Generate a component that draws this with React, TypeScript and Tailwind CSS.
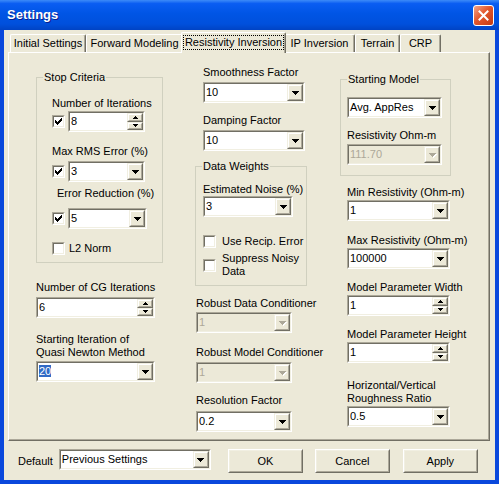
import React from 'react';

const sunkenOuter = 'border border-t-[#ACA899] border-l-[#ACA899] border-r-white border-b-white';
const sunkenInner = 'border border-t-[#716F64] border-l-[#716F64] border-r-[#F1EFE2] border-b-[#F1EFE2]';
const raisedOuter = 'border border-t-[#F1EFE2] border-l-[#F1EFE2] border-r-[#716F64] border-b-[#716F64]';
const raisedInner = 'border border-t-white border-l-white border-r-[#ACA899] border-b-[#ACA899]';

function Tri({ up, small, disabled }: { up?: boolean; small?: boolean; disabled?: boolean }) {
  const size = small ? 5 : 7;
  const rows = small ? [5, 3, 1] : [7, 5, 3, 1];
  const h = rows.length;
  return (
    <svg width={size} height={h} shapeRendering="crispEdges" className="block overflow-visible">
      {disabled &&
        rows.map((w, i) => (
          <rect key={'s' + i} x={(size - w) / 2 + 1} y={(up ? h - 1 - i : i) + 1} width={w} height={1} fill="#fff" />
        ))}
      {rows.map((w, i) => (
        <rect key={i} x={(size - w) / 2} y={up ? h - 1 - i : i} width={w} height={1} fill={disabled ? '#ACA899' : '#000'} />
      ))}
    </svg>
  );
}

function DropBtn({ disabled }: { disabled?: boolean }) {
  return (
    <div className={`h-full w-[16px] shrink-0 ${raisedOuter}`}>
      <div className={`flex h-full items-center justify-center bg-[#ECE9D8] ${raisedInner}`}>
        <Tri disabled={disabled} />
      </div>
    </div>
  );
}

function SpinHalf({ up }: { up?: boolean }) {
  return (
    <div className={`flex-1 ${raisedOuter}`}>
      <div className={`flex h-full items-center justify-center bg-[#ECE9D8] ${raisedInner}`}>
        <Tri up={up} small />
      </div>
    </div>
  );
}

function Field({
  w,
  value,
  spin,
  disabled,
  selected,
  className = '',
}: {
  w: string;
  value: string;
  spin?: boolean;
  disabled?: boolean;
  selected?: boolean;
  className?: string;
}) {
  return (
    <div className={`h-[21px] shrink-0 ${w} ${sunkenOuter} ${className}`}>
      <div className={`flex h-full ${sunkenInner} ${disabled ? 'bg-[#ECE9D8]' : 'bg-white'}`}>
        <div className={`flex-1 truncate pl-[1px] leading-[17px] ${disabled ? 'text-[#ACA899]' : ''}`}>
          {selected ? <span className="bg-[#316AC5] text-white">{value}</span> : value}
        </div>
        {spin ? (
          <div className="flex h-full w-[16px] shrink-0 flex-col">
            <SpinHalf up />
            <SpinHalf />
          </div>
        ) : (
          <DropBtn disabled={disabled} />
        )}
      </div>
    </div>
  );
}

function Check({ checked }: { checked?: boolean }) {
  return (
    <div className={`h-[13px] w-[13px] shrink-0 ${sunkenOuter}`}>
      <div className={`flex h-full w-full items-center justify-center bg-white ${sunkenInner}`}>
        {checked && (
          <svg width="7" height="7" shapeRendering="crispEdges" className="block">
            <rect x="6" y="0" width="1" height="1" />
            <rect x="5" y="1" width="2" height="1" />
            <rect x="0" y="2" width="1" height="1" />
            <rect x="4" y="2" width="3" height="1" />
            <rect x="0" y="3" width="2" height="1" />
            <rect x="3" y="3" width="3" height="1" />
            <rect x="0" y="4" width="5" height="1" />
            <rect x="1" y="5" width="3" height="1" />
            <rect x="2" y="6" width="1" height="1" />
          </svg>
        )}
      </div>
    </div>
  );
}

function Label({ children, className = '' }: { children: React.ReactNode; className?: string }) {
  return <div className={`whitespace-nowrap leading-[13px] ${className}`}>{children}</div>;
}

function Group({ title, className, children }: { title: string; className: string; children: React.ReactNode }) {
  return (
    <div className={`relative flex flex-col border border-[#D0D0BF] ${className}`}>
      <span className="absolute left-[6px] top-[-7px] bg-[#ECE9D8] px-[1px] leading-[13px]">{title}</span>
      {children}
    </div>
  );
}

function Tab({ label, w, selected }: { label: string; w: string; selected?: boolean }) {
  if (selected) {
    return (
      <div
        className={`relative z-10 -mx-[2px] mb-[-1px] flex h-[21px] items-start justify-center rounded-t-[2px] border-l border-t border-r border-l-white border-t-white border-r-[#716F64] bg-[#ECE9D8] pt-[2px] shadow-[inset_-1px_0_0_#ACA899] ${w}`}
      >
        <span className="whitespace-nowrap border border-dotted border-black px-[1px] leading-[13px]">{label}</span>
      </div>
    );
  }
  return (
    <div
      className={`flex h-[18px] items-center justify-center rounded-t-[2px] border-l border-t border-r border-l-white border-t-white border-r-[#716F64] shadow-[inset_-1px_0_0_#ACA899] ${w}`}
    >
      <span className="whitespace-nowrap leading-[13px]">{label}</span>
    </div>
  );
}

function Button({ label, className }: { label: string; className: string }) {
  return (
    <div className={`h-[24px] w-[75px] border border-t-white border-l-white border-r-[#716F64] border-b-[#716F64] ${className}`}>
      <div className="flex h-full items-center justify-center border border-t-[#F1EFE2] border-l-[#F1EFE2] border-r-[#ACA899] border-b-[#ACA899] bg-[#ECE9D8]">
        {label}
      </div>
    </div>
  );
}

export default function App() {
  return (
    <div className="flex h-[484px] w-[499px] flex-col bg-[#0A48DC] font-['Liberation_Sans',Arial,sans-serif] text-[11px] text-black">
      {/* title bar */}
      <div className="flex h-[30px] shrink-0 items-center bg-[linear-gradient(to_bottom,#3D8BF8,#0A5DF2_12%,#0055E5_45%,#0050DC_80%,#0043C4)] pl-[7px] pr-[5px]">
        <span className="text-[13px] font-bold text-white [text-shadow:1px_1px_0_#0A1E8C]">Settings</span>
        <div className="ml-auto flex h-[21px] w-[21px] items-center justify-center rounded-[3px] border border-white bg-[linear-gradient(135deg,#F3A58A,#E3572D_45%,#C23A12)]">
          <svg width="11" height="11" className="block">
            <path d="M1.5 1.5l8 8M9.5 1.5l-8 8" stroke="#fff" strokeWidth="2" strokeLinecap="square" />
          </svg>
        </div>
      </div>

      {/* client */}
      <div className="mx-[4px] mb-[4px] flex flex-1 flex-col bg-[#ECE9D8]">
        <div className="mt-[2px] flex h-[20px] items-end pl-[6px]">
          <Tab label="Initial Settings" w="w-[76px]" />
          <Tab label="Forward Modeling" w="w-[97px]" />
          <Tab label="Resistivity Inversion" w="w-[105px]" selected />
          <Tab label="IP Inversion" w="w-[71px]" />
          <Tab label="Terrain" w="w-[45px]" />
          <Tab label="CRP" w="w-[41px]" />
        </div>

        <div className="ml-[4px] flex h-[389px] w-[482px] border border-t-white border-l-white border-r-[#716F64] border-b-[#716F64] pl-[27px] shadow-[inset_-1px_-1px_0_#ACA899]">
          {/* left column */}
          <div className="flex w-[127px] flex-col">
            <Group title="Stop Criteria" className="mt-[24px] pb-[7px] pl-[15px] pt-[19px]">
              <Label>Number of Iterations</Label>
              <div className="mt-[1px] flex items-center">
                <Check checked />
                <Field w="w-[77px]" value="8" spin className="ml-[3px]" />
              </div>
              <Label className="mt-[13px]">Max RMS Error (%)</Label>
              <div className="mt-[3px] flex items-center">
                <Check checked />
                <Field w="w-[77px]" value="3" className="ml-[3px]" />
              </div>
              <Label className="mt-[5px] pl-[5px]">Error Reduction (%)</Label>
              <div className="mt-[8px] flex items-center">
                <Check checked />
                <Field w="w-[79px]" value="5" className="ml-[3px]" />
              </div>
              <div className="mt-[13px] flex items-center">
                <Check />
                <Label className="ml-[4px]">L2 Norm</Label>
              </div>
            </Group>
            <Label className="mt-[18px]">Number of CG Iterations</Label>
            <Field w="w-[119px]" value="6" spin className="mt-[3px]" />
            <Label className="mt-[15px]">
              Starting Iteration of
              <br />
              Quasi Newton Method
            </Label>
            <Field w="w-[119px]" value="20" selected className="mt-[2px]" />
          </div>

          {/* middle column */}
          <div className="ml-[32px] flex w-[112px] flex-col">
            <Label className="ml-[8px] mt-[13px]">Smoothness Factor</Label>
            <Field w="w-[102px]" value="10" className="ml-[8px] mt-[3px]" />
            <Label className="ml-[8px] mt-[11px]">Damping Factor</Label>
            <Field w="w-[102px]" value="10" className="ml-[8px] mt-[3px]" />
            <Group title="Data Weights" className="mt-[15px] pb-[7px] pl-[7px] pt-[16px]">
              <Label>Estimated Noise (%)</Label>
              <Field w="w-[90px]" value="3" />
              <div className="mt-[18px] flex items-center">
                <Check />
                <Label className="ml-[6px]">Use Recip. Error</Label>
              </div>
              <div className="mt-[4px] flex items-center">
                <Check />
                <Label className="ml-[6px]">
                  Suppress Noisy
                  <br />
                  Data
                </Label>
              </div>
            </Group>
            <Label className="ml-[1px] mt-[11px]">Robust Data Conditioner</Label>
            <Field w="w-[96px]" value="1" disabled className="ml-[1px] mt-[2px]" />
            <Label className="ml-[1px] mt-[13px]">Robust Model Conditioner</Label>
            <Field w="w-[96px]" value="1" disabled className="ml-[1px] mt-[3px]" />
            <Label className="ml-[1px] mt-[11px]">Resolution Factor</Label>
            <Field w="w-[96px]" value="0.2" className="ml-[1px] mt-[4px]" />
          </div>

          {/* right column */}
          <div className="ml-[33px] flex w-[111px] flex-col">
            <Group title="Starting Model" className="mt-[26px] pb-[10px] pl-[6px] pt-[17px]">
              <Field w="w-[95px]" value="Avg. AppRes" />
              <Label className="mt-[11px]">Resistivity Ohm-m</Label>
              <Field w="w-[95px]" value="111.70" disabled className="mt-[2px]" />
            </Group>
            <Label className="ml-[7px] mt-[10px]">Min Resistivity (Ohm-m)</Label>
            <Field w="w-[103px]" value="1" className="ml-[7px] mt-[1px]" />
            <Label className="ml-[7px] mt-[13px]">Max Resistivity (Ohm-m)</Label>
            <Field w="w-[103px]" value="100000" className="ml-[7px] mt-[1px]" />
            <Label className="ml-[7px] mt-[12px]">Model Parameter Width</Label>
            <Field w="w-[103px]" value="1" spin className="ml-[7px] mt-[1px]" />
            <Label className="ml-[7px] mt-[12px]">Model Parameter Height</Label>
            <Field w="w-[103px]" value="1" spin className="ml-[7px] mt-[1px]" />
            <Label className="ml-[7px] mt-[16px]">
              Horizontal/Vertical
              <br />
              Roughness Ratio
            </Label>
            <Field w="w-[103px]" value="0.5" className="ml-[7px] mt-[1px]" />
          </div>
        </div>

        {/* bottom row */}
        <div className="mt-[8px] flex items-start">
          <Label className="ml-[14px] mt-[6px]">Default</Label>
          <Field w="w-[152px]" value="Previous Settings" className="ml-[6px]" />
          <Button label="OK" className="ml-[17px]" />
          <Button label="Cancel" className="ml-[12px]" />
          <Button label="Apply" className="ml-[13px]" />
        </div>
      </div>
    </div>
  );
}
